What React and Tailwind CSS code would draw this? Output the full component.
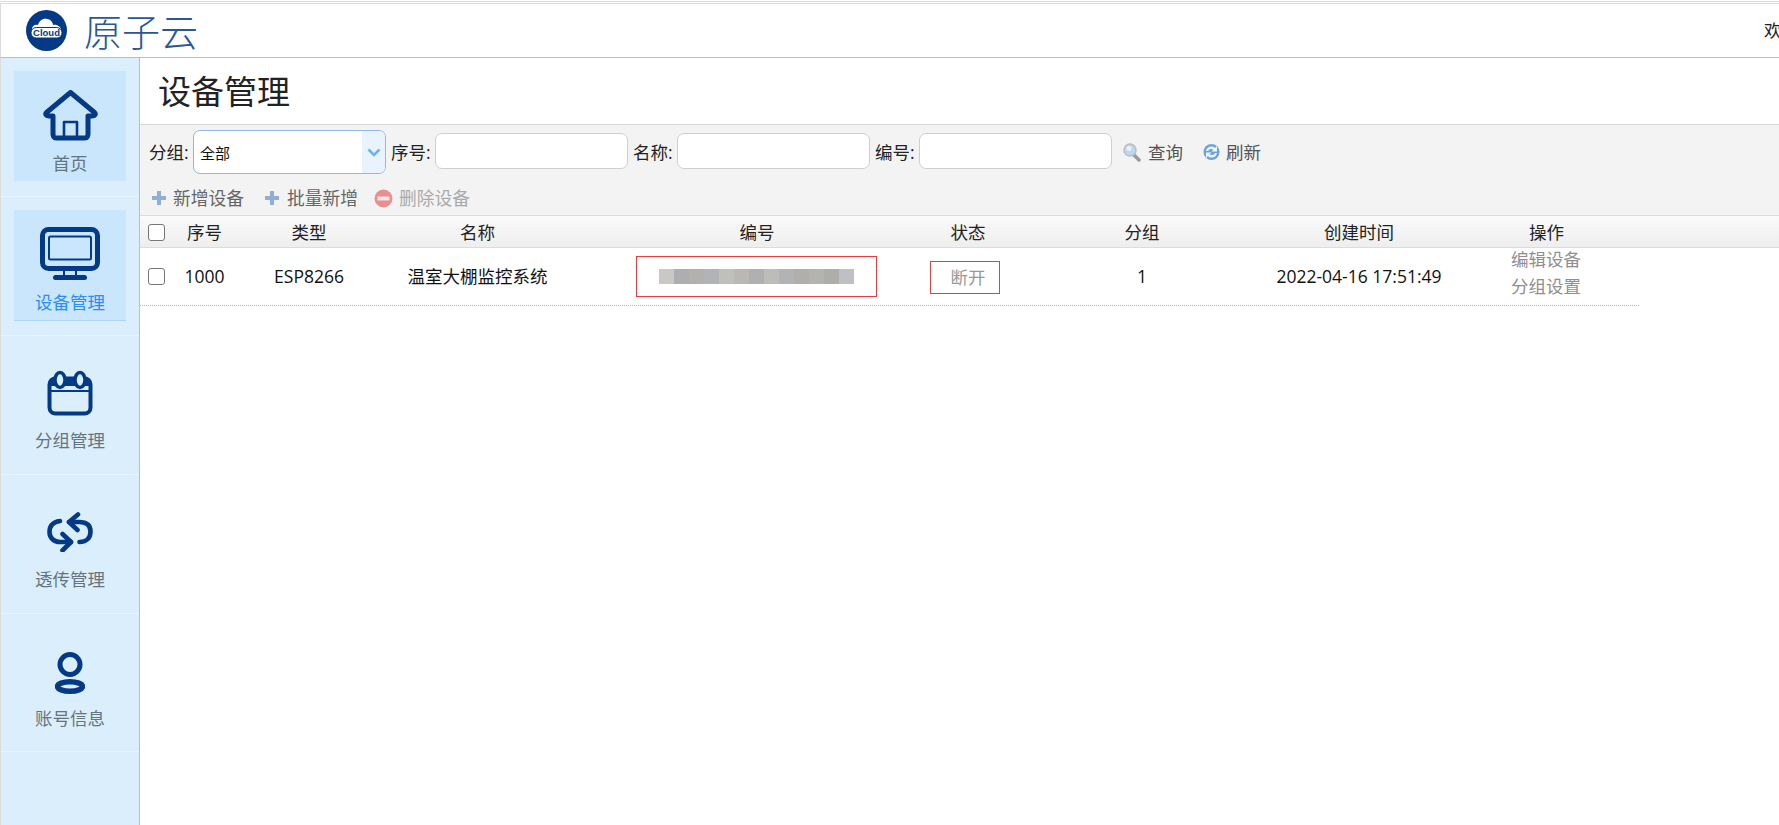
import React from "react";

const NAVY = "#043a85";

function Logo() {
  return (
    <svg width="41" height="41" viewBox="0 0 41 41" className="shrink-0">
      <circle cx="20.5" cy="20.5" r="20.5" fill={NAVY} />
      <path d="M10 24c-3-1-4-3-4-5 0-3 3-5 6-4 1-4 5-7 9-6 3 0 6 3 6 6 4-1 8 2 8 5 0 2-1 4-3 4z" fill="#fff" />
      <rect x="5" y="17.500" width="31" height="10.500" rx="5.200" fill="#fff" stroke={NAVY} strokeWidth="1" />
      <text x="20.5" y="26" textAnchor="middle" fontSize="9.500" fontWeight="700" fill={NAVY} fontFamily="'Liberation Sans', sans-serif">Cloud</text>
    </svg>
  );
}

function HomeIcon() {
  return (
    <svg width="55" height="51" viewBox="0 0 55 51" fill="none" stroke={NAVY} strokeLinejoin="round" strokeLinecap="round" className="block">
      <path d="M10 26H5.5c-2.5 0-3.5-2-2-3.5L27.5 2.5l24 20c1.500 1.500.5 3.500-2 3.500H45v18c0 2-1 4-3 4H13c-2 0-3-2-3-4z" strokeWidth="5" />
      <path d="M21 48V32h13v16" strokeWidth="2.6" />
    </svg>
  );
}

function MonitorIcon() {
  return (
    <svg width="60" height="53" viewBox="0 0 60 53" fill="none" stroke={NAVY} strokeLinecap="round" className="block">
      <rect x="2.500" y="2.500" width="55" height="39" rx="6" strokeWidth="5" />
      <rect x="9" y="9.500" width="42" height="23" rx="1.500" strokeWidth="2" />
      <path d="M24 42v7M36 42v7" strokeWidth="2" strokeLinecap="butt" />
      <path d="M15.500 50.500h29" strokeWidth="5" />
    </svg>
  );
}

function CalendarIcon() {
  return (
    <svg width="46" height="46" viewBox="0 0 46 46" fill="none" stroke={NAVY} className="block">
      <rect x="2.500" y="8.500" width="41" height="35" rx="6" strokeWidth="4" />
      <path d="M2 21h42" strokeWidth="2" />
      <path d="M3 16V12a5 5 0 0 1 5-5h30a5 5 0 0 1 5 5v4z" fill={NAVY} stroke="none" />
      <ellipse cx="13" cy="10" rx="5" ry="7.500" fill="#dbeefb" strokeWidth="3.500" />
      <ellipse cx="33" cy="10" rx="5" ry="7.500" fill="#dbeefb" strokeWidth="3.500" />
    </svg>
  );
}

function SyncIcon() {
  return (
    <svg width="46" height="40" viewBox="0 0 46 40" fill="none" stroke={NAVY} strokeWidth="4.600" strokeLinecap="round" strokeLinejoin="round" className="block">
      <path d="M13 9C6 10 2.500 14 2.500 20c0 6 4.500 10 10.500 10h11" />
      <path d="M15.500 22 24 30l-8.500 8.500" />
      <path d="M32.500 30c7.500 0 11-4.500 11-10.500C43.500 13 39 10 32 10H22" />
      <path d="M31 2.500 22 10l8.500 8" />
    </svg>
  );
}

function PersonIcon() {
  return (
    <svg width="30" height="42" viewBox="0 0 30 42" fill="none" stroke={NAVY} className="block">
      <circle cx="15" cy="12.500" r="10" strokeWidth="5" />
      <ellipse cx="15" cy="34.500" rx="12.600" ry="4.800" strokeWidth="5.400" />
    </svg>
  );
}

function Plus() {
  return (
    <svg width="14" height="14" viewBox="0 0 14 14" className="shrink-0">
      <path d="M5 0h4v5h5v4H9v5H5V9H0V5h5z" fill="#8fb0d6" />
    </svg>
  );
}

function Minus() {
  return (
    <svg width="19" height="19" viewBox="0 0 19 19" className="shrink-0">
      <circle cx="9.500" cy="9.500" r="9" fill="#e88f8f" />
      <rect x="3.500" y="7.500" width="12" height="4" fill="#f6e4e4" />
    </svg>
  );
}

function Search() {
  return (
    <svg width="18" height="19" viewBox="0 0 18 19" className="shrink-0">
      <path d="M11 12l5 5" stroke="#9a9a9a" strokeWidth="3.500" strokeLinecap="round" />
      <circle cx="7" cy="7" r="6" fill="#bcd7f0" stroke="#bdbdbd" strokeWidth="1.500" />
      <circle cx="6" cy="5.500" r="2.500" fill="#e6f2fc" />
    </svg>
  );
}

function Refresh() {
  return (
    <svg width="17" height="18" viewBox="0 0 17 18" className="shrink-0">
      <circle cx="8.500" cy="9" r="8" fill="#6ea3da" />
      <path d="M3 8c.5-3 3-4.500 5.500-4.500 1.500 0 2.500.5 3.500 1.500L14 3v5.500H8.500l2-1.800C9 5.500 6 5.500 5 8zM14 10c-.5 3-3 4.500-5.500 4.500-1.500 0-2.500-.5-3.500-1.500L3 15V9.500h5.500l-2 1.800C8 12.500 11 12.500 12 10z" fill="#eef5fc" />
    </svg>
  );
}

function Chevron() {
  return (
    <svg width="14" height="9" viewBox="0 0 14 9" fill="none" stroke="#6db3ee" strokeWidth="2.600">
      <path d="M1.500 1.500 7 7l5.500-5.500" />
    </svg>
  );
}

function NavItem({ icon, label, active, iconClass, labelClass, heightClass = "h-[139px]" }) {
  return (
    <div className={heightClass + " shrink-0 border-b border-[#e9f4fc] px-[13px] pt-[13px]"}>
      <div className={"flex flex-col items-center " + (active ? "h-[111px] border-b border-[#a9d6fb] bg-[#c9e6fd]" : label === "首页" ? "h-[110px] bg-[#c9e6fd]" : "h-[110px]")}>
        <div className={iconClass}>{icon}</div>
        <div className={"text-[17.500px] leading-6 whitespace-nowrap " + labelClass + " " + (active ? "text-[#2b8df5]" : "text-[#667480]")}>{label}</div>
      </div>
    </div>
  );
}

function Field({ label, labelClass, children }) {
  return (
    <>
      <span className={"w-[40px] shrink-0 whitespace-nowrap text-[17.500px] text-[#222] " + labelClass}>{label}</span>
      {children}
    </>
  );
}

const inputCls = "mb-[2px] h-[36px] w-[193px] shrink-0 rounded-[7px] border border-[#cfcfcf] bg-white";

const blurCells = ["#c9c8c5", "#aeaeb0", "#b3b1ad", "#b2b3b7", "#bfbfbb", "#b9b8b4", "#b0b0b0", "#bcbcb8", "#b2b3b5", "#b0afac", "#b3b3b0", "#aeada8", "#bfc0c4"];

const gridCls = "grid grid-cols-[25px_79px_130px_207px_352px_70px_278px_156px_202px] items-center";

function Check() {
  return <span className="block h-[17px] w-[17px] rounded-[3px] border border-[#767676] bg-white" />;
}

function Cell({ children, className = "" }) {
  return <div className={"flex items-center justify-center whitespace-nowrap " + className}>{children}</div>;
}

export default function App() {
  return (
    <div className="flex h-screen w-screen flex-col overflow-hidden bg-white text-[#111] [font-family:'Open_Sans','Noto_Sans_CJK_SC',sans-serif]">
      <div className="mt-px h-px shrink-0 bg-[#dcdcdc]" />
      <div className="mt-px h-px shrink-0 bg-[#dcdcdc]" />
      <header className="flex h-[54px] shrink-0 items-center justify-between border-b border-l border-b-[#a9c0d8] border-l-[#dcdcdc] bg-white pl-[25px]">
        <div className="flex items-center">
          <Logo />
          <span className="ml-[17px] text-[38px] leading-none font-light text-[#2a5795]">原子云</span>
        </div>
        <div className="w-[15px] overflow-hidden text-[17.500px] whitespace-nowrap text-[#222]">欢迎您</div>
      </header>
      <div className="flex min-h-0 flex-1">
        <aside className="flex w-[140px] shrink-0 flex-col border-r border-l border-r-[#a9c4d8] border-l-[#dcdcdc] bg-[#dbeefb]">
          <NavItem label="首页" icon={<HomeIcon />} iconClass="mt-[19px]" labelClass="mt-[10px]" />
          <NavItem label="设备管理" active icon={<MonitorIcon />} iconClass="mt-[17px]" labelClass="mt-[10px]" />
          <NavItem label="分组管理" icon={<CalendarIcon />} iconClass="mt-[21px]" labelClass="mt-[12px]" />
          <NavItem label="透传管理" icon={<SyncIcon />} iconClass="mt-[24px]" labelClass="mt-[15px]" />
          <NavItem label="账号信息" heightClass="h-[138px]" icon={<PersonIcon />} iconClass="mt-[25px]" labelClass="mt-[12px]" />
        </aside>
        <main className="min-w-0 flex-1">
          <div className="flex h-[67px] items-center border-b border-[#d8d8d8] pl-[18px]">
            <h1 className="text-[33px] leading-none font-normal text-[#222]">设备管理</h1>
          </div>
          <div className="h-[91px] border-b border-[#dcdcdc] bg-[#f3f3f3] pl-[9px]">
            <div className="flex h-[49px] items-center pt-[5px]">
              <Field label="分组:" labelClass="mr-[4px]">
                <div className="mr-[5px] flex h-[44px] w-[193px] shrink-0 overflow-hidden rounded-[7px] border border-[#8fb8e8] bg-white">
                  <span className="flex flex-1 items-center pt-[2px] pl-[6px] text-[15px] text-[#111]">全部</span>
                  <span className="flex w-[23px] items-center justify-center bg-[#e8f3fe]"><Chevron /></span>
                </div>
              </Field>
              <Field label="序号:" labelClass="mr-[4px]"><div className={inputCls} /></Field>
              <Field label="名称:" labelClass="mr-[4px] ml-[5px]"><div className={inputCls} /></Field>
              <Field label="编号:" labelClass="mr-[4px] ml-[5px]"><div className={inputCls} /></Field>
              <div className="ml-[11px] flex items-center gap-[7px] text-[17.500px] text-[#555]"><Search /><span>查询</span></div>
              <div className="ml-[20px] flex items-center gap-[6px] text-[17.500px] text-[#555]"><Refresh /><span>刷新</span></div>
            </div>
            <div className="mt-[11px] flex h-[26px] items-center text-[17.750px] text-[#666]">
              <div className="ml-[3px] flex items-center gap-[7px]"><Plus /><span>新增设备</span></div>
              <div className="ml-[21px] flex items-center gap-[8px]"><Plus /><span>批量新增</span></div>
              <div className="ml-[16px] flex items-center gap-[6px] text-[#aaa]"><Minus /><span>删除设备</span></div>
            </div>
          </div>
          <div className={gridCls + " h-[32px] border-b border-[#dcdcdc] bg-linear-to-b from-[#fafafa] to-[#eeeeee] pt-[2px] text-[17.500px] text-[#222]"}>
            <div className="pl-[8px]"><Check /></div>
            <Cell>序号</Cell>
            <Cell>类型</Cell>
            <Cell>名称</Cell>
            <Cell>编号</Cell>
            <Cell>状态</Cell>
            <Cell>分组</Cell>
            <Cell>创建时间</Cell>
            <div className="pl-[92px]">操作</div>
          </div>
          <div className={gridCls + " h-[58px] w-[1499px] border-b border-dotted border-[#bbbbbb] text-[17.500px] text-[#111]"}>
            <div className="pl-[8px]"><Check /></div>
            <Cell>1000</Cell>
            <Cell>ESP8266</Cell>
            <Cell>温室大棚监控系统</Cell>
            <Cell className="pr-[2px]">
              <div className="flex h-[41px] w-[241px] items-center justify-center border border-[#ee3a3a]">
                <div className="flex h-[15px] w-[195px]">
                  {blurCells.map((c, i) => (
                    <span key={i} className="h-full w-[15px]" style={{ backgroundColor: c }} />
                  ))}
                </div>
              </div>
            </Cell>
            <Cell className="pt-[2px] pr-[7px]">
              <div className="flex h-[33px] w-[70px] shrink-0 items-center justify-center border border-[#ee3a3a] pl-[7px] text-[#999]">断开</div>
            </Cell>
            <Cell>1</Cell>
            <Cell>2022-04-16 17:51:49</Cell>
            <div className="-mt-[2px] self-start pl-[74px] text-[#8f8f8f]">
              <div className="leading-[27px]">编辑设备</div>
              <div className="leading-[27px]">分组设置</div>
            </div>
          </div>
        </main>
      </div>
    </div>
  );
}
